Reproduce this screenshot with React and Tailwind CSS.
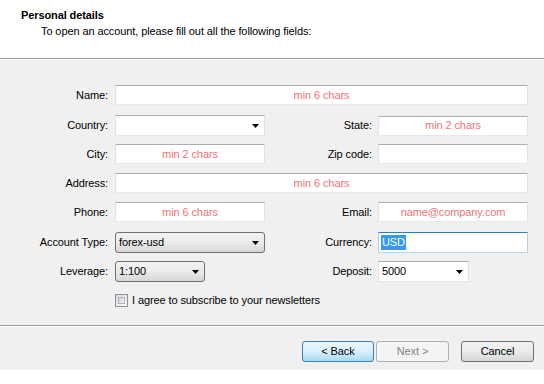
import React from 'react';

const font = { fontFamily: '"Liberation Sans", Arial, sans-serif' };

function Arrow() {
  return (
    <svg width="7" height="4" viewBox="0 0 7 4" className="shrink-0">
      <path d="M0 0h7L3.5 4z" fill="#000" />
    </svg>
  );
}

function TextBox({ width, hint, children }) {
  return (
    <div
      className={`${width} h-[20px] bg-white border border-t-[#abadb3] border-x-[#e2e3ea] border-b-[#e3e9ef] flex items-center justify-center text-[11px] text-[#f07474]`}
    >
      {hint}
      {children}
    </div>
  );
}

function EditCombo({ width, value }) {
  return (
    <div
      className={`${width} h-[21px] bg-white border border-t-[#abadb3] border-x-[#e2e3ea] border-b-[#e3e9ef] flex items-center justify-between pl-[3px] pr-[5px] text-[11px] text-black`}
    >
      <span>{value}</span>
      <Arrow />
    </div>
  );
}

function ListCombo({ width, value }) {
  return (
    <div
      className={`${width} h-[21px] rounded-[3px] border border-[#707070] bg-gradient-to-b from-[#f2f2f2] via-[#ebebeb] to-[#d6d6d6] flex items-center justify-between pl-[3px] pr-[5px] text-[11px] text-black`}
    >
      <span>{value}</span>
      <Arrow />
    </div>
  );
}

function Row({ mt, left, right }) {
  return (
    <div className={`flex items-center ${mt}`}>
      <div className="w-[108px] text-right">{left[0]}</div>
      <div className="ml-[7px]">{left[1]}</div>
      {right && (
        <>
          <div className="w-[107px] text-right">{right[0]}</div>
          <div className="ml-[6px]">{right[1]}</div>
        </>
      )}
    </div>
  );
}

export default function App() {
  return (
    <div className="w-[544px] h-[384px] flex flex-col text-[11px] text-black bg-white tracking-[-0.1px]" style={font}>
      {/* header */}
      <div className="h-[58px] bg-white pl-[21px] pt-[8px]">
        <p className="font-bold leading-[14px]">Personal details</p>
        <p className="pl-[20px] leading-[14px] mt-[2px]">
          To open an account, please fill out all the following fields:
        </p>
      </div>
      <div className="h-[2px] border-t border-t-[#a0a0a0] border-b border-b-white" />

      {/* form */}
      <div className="h-[265px] bg-[#f0f0f0] pt-[25px] flex flex-col">
        <div className="flex items-center">
          <div className="w-[108px] text-right">Name:</div>
          <div className="ml-[7px]">
            <TextBox width="w-[413px]" hint="min 6 chars" />
          </div>
        </div>
        <Row
          mt="mt-[10px]"
          left={['Country:', <EditCombo width="w-[150px]" value="" />]}
          right={['State:', <TextBox width="w-[150px]" hint="min 2 chars" />]}
        />
        <Row
          mt="mt-[8px]"
          left={['City:', <TextBox width="w-[150px]" hint="min 2 chars" />]}
          right={['Zip code:', <TextBox width="w-[150px]" />]}
        />
        <div className="flex items-center mt-[9px]">
          <div className="w-[108px] text-right">Address:</div>
          <div className="ml-[7px]">
            <TextBox width="w-[413px]" hint="min 6 chars" />
          </div>
        </div>
        <Row
          mt="mt-[9px]"
          left={['Phone:', <TextBox width="w-[150px]" hint="min 6 chars" />]}
          right={['Email:', <TextBox width="w-[150px]" hint="name@company.com" />]}
        />
        <Row
          mt="mt-[10px]"
          left={['Account Type:', <ListCombo width="w-[150px]" value="forex-usd" />]}
          right={[
            'Currency:',
            <div className="w-[150px] h-[21px] bg-white border border-t-[#3d7bad] border-x-[#b5cfe7] border-b-[#b7d9ed] flex items-center pl-[2px]">
              <span className="bg-[#3399ff] text-white px-[1px] leading-[15px]">USD</span>
            </div>,
          ]}
        />
        <div className="flex items-center mt-[8px]">
          <div className="w-[108px] text-right">Leverage:</div>
          <div className="ml-[7px]">
            <ListCombo width="w-[90px]" value="1:100" />
          </div>
          <div className="w-[167px] text-right">Deposit:</div>
          <div className="ml-[6px]">
            <EditCombo width="w-[91px]" value="5000" />
          </div>
        </div>
        <div className="flex items-center mt-[10px] ml-[115px]">
          <div className="w-[13px] h-[13px] border border-[#8e8f8f] bg-gradient-to-br from-[#dcdcdc] to-[#fbfbfb] p-[2px]">
            <div className="w-full h-full border border-[#aeb3b9] bg-gradient-to-br from-[#cbcfd5] to-[#f6f6f6]" />
          </div>
          <span className="ml-[4px]">I agree to subscribe to your newsletters</span>
        </div>
      </div>
      <div className="h-[2px] border-t border-t-[#a0a0a0] border-b border-b-white" />

      {/* footer */}
      <div className="h-[43px] bg-[#f0f0f0] flex items-start pt-[14px] pl-[302px]">
        <button className="w-[72px] h-[21px] rounded-[3px] border border-[#3c7fb1] bg-gradient-to-b from-[#eaf6fd] via-[#d9f0fc] to-[#a7d9f5] text-[11px] text-black">
          &lt; Back
        </button>
        <button className="ml-[2px] w-[73px] h-[21px] rounded-[3px] border border-[#adb2b5] bg-[#f4f4f4] text-[11px] text-[#838383]">
          Next &gt;
        </button>
        <button className="ml-[12px] w-[73px] h-[21px] rounded-[3px] border border-[#707070] bg-gradient-to-b from-[#f2f2f2] via-[#ebebeb] to-[#d6d6d6] text-[11px] text-black">
          Cancel
        </button>
      </div>
      <div className="flex-1 bg-white" />
    </div>
  );
}
